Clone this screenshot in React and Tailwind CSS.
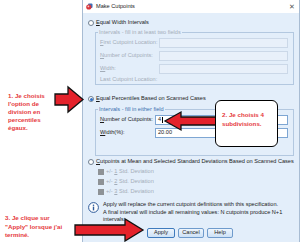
import React from "react";

function Radio({ checked }) {
  return (
    <span className="flex h-[6px] w-[6px] shrink-0 items-center justify-center rounded-full border border-[#6f7f91] bg-white">
      {checked && <span className="h-[3px] w-[3px] rounded-full bg-[#2f6fc6]" />}
    </span>
  );
}

function AppIcon() {
  return (
    <svg width="7" height="7" viewBox="0 0 7 7" aria-hidden="true">
      <rect x="2" y="0.5" width="4.5" height="4.5" rx="1" fill="#3d6fb8" />
      <circle cx="2.8" cy="4" r="2.6" fill="#d8343b" />
      <circle cx="2.4" cy="3.4" r="0.9" fill="#f7c5c5" />
    </svg>
  );
}

function Field({ label, value, disabled, labelWidth, inputWidth, hasInput = true, mnemonic }) {
  return (
    <div className="flex h-[10px] items-center">
      <span className={`shrink-0 ${disabled ? "text-[#a3adb9]" : "text-[#1b1b1b]"}`} style={{ width: labelWidth }}>
        {mnemonic ? (
          <>
            <span className="underline">{label[0]}</span>
            {label.slice(1)}
          </>
        ) : (
          label
        )}
      </span>
      {hasInput && (
        <div
          className={`flex h-[10px] items-center px-[2px] ${
            disabled ? "border border-[#cbd8e8] bg-[#e8f0fa]" : "border border-[#7ea6d3] bg-white"
          }`}
          style={{ width: inputWidth }}
        >
          {value}
        </div>
      )}
    </div>
  );
}

function Check({ n }) {
  return (
    <div className="flex h-[10px] items-center gap-[2px] text-[#a3adb9]">
      <span className="h-[6px] w-[6px] shrink-0 bg-[#8e9296]" />
      <span>
        +/- <span className="underline">{n}</span> Std. Deviation
      </span>
    </div>
  );
}

function Button({ children, width, focused }) {
  return (
    <div
      className={`flex h-[10px] items-center justify-center rounded-[2px] border bg-gradient-to-b from-[#eef5fd] to-[#cde1f6] ${
        focused ? "border-[#3f7bbd]" : "border-[#6f9bcc]"
      }`}
      style={{ width }}
    >
      {children}
    </div>
  );
}

export default function App() {
  return (
    <div className="relative flex h-[242px] w-[300px] overflow-hidden bg-white font-['Liberation_Sans',Arial,sans-serif] text-[5.6px] leading-none text-[#1b1b1b]">
      <div className="w-[82px] shrink-0" />

      <div className="flex w-[218px] flex-col border-x border-[#a8bcd3]">
        <div className="flex h-[13px] shrink-0 items-center bg-white pl-[3px] pr-[4px]">
          <AppIcon />
          <span className="ml-[3px] flex-1">Make Cutpoints</span>
          <span className="text-[7px] text-[#555]">✕</span>
        </div>

        <div className="flex flex-1 flex-col bg-[#e3eefa] pl-[5px] pr-[5px] pt-[5px]">
          <div className="flex h-[9px] items-center gap-[2px]">
            <Radio />
            <span>
              <span className="underline">E</span>qual Width Intervals
            </span>
          </div>

          <div className="ml-[7px] mt-[5px] h-[53px] border border-[#b3c8e0] pl-[4px] pr-[4px]">
            <span className="-ml-[2px] -mt-[4px] block h-[7px] w-fit bg-[#e3eefa] px-[1px] leading-[7px] text-[#a3adb9]">
              Intervals - fill in at least two fields
            </span>
            <div className="mt-[2px] flex flex-col gap-[3px]">
              <Field label="First Cutpoint Location:" disabled labelWidth={59} inputWidth={129} mnemonic />
              <Field label="Number of Cutpoints:" disabled labelWidth={59} inputWidth={129} mnemonic />
              <Field label="Width:" disabled labelWidth={59} inputWidth={129} mnemonic />
            </div>
            <div className="mt-[2px] flex h-[8px] items-center text-[#a3adb9]">Last Cutpoint Location:</div>
          </div>

          <div className="mt-[10px] flex h-[8px] items-center gap-[2px]">
            <Radio checked />
            <span>
              <span className="underline">E</span>qual Percentiles Based on Scanned Cases
            </span>
          </div>

          <div className="ml-[7px] mt-[6px] h-[47px] border border-[#b3c8e0] pl-[4px] pr-[4px]">
            <span className="-ml-[2px] -mt-[4px] block h-[7px] w-fit bg-[#e3eefa] px-[1px] leading-[7px] text-[#3b6fae]">
              Intervals - fill in either field
            </span>
            <div className="mt-[2px] flex flex-col gap-[3px]">
              <Field
                label="Number of Cutpoints:"
                labelWidth={55}
                inputWidth={133}
                mnemonic
                value={
                  <span className="flex items-center">
                    4<span className="ml-[1px] h-[6px] w-[0.6px] bg-black" />
                  </span>
                }
              />
              <Field label="Width(%):" labelWidth={55} inputWidth={133} mnemonic value="20.00" />
            </div>
          </div>

          <div className="mt-[2px] flex h-[8px] items-center gap-[2px]">
            <Radio />
            <span>
              <span className="underline">C</span>utpoints at Mean and Selected Standard Deviations Based on Scanned Cases
            </span>
          </div>

          <div className="ml-[10px] mt-[1px] flex flex-col">
            <Check n="1" />
            <Check n="2" />
            <Check n="3" />
          </div>

          <div className="mt-[4px] flex gap-[4px]">
            <svg width="11" height="11" viewBox="0 0 11 11" className="mt-[1px] shrink-0" aria-hidden="true">
              <circle cx="5.5" cy="5.5" r="4.9" fill="white" stroke="#2d5a9a" strokeWidth="1" />
              <circle cx="5.5" cy="3.2" r="0.8" fill="#2d5a9a" />
              <rect x="4.8" y="4.6" width="1.4" height="3.8" fill="#2d5a9a" />
            </svg>
            <div className="flex flex-col leading-[7.5px]">
              <span>Apply will replace the current cutpoint definitions with this specification.</span>
              <span>A final interval will include all remaining values: N cutpoints produce N+1</span>
              <span>intervals.</span>
            </div>
          </div>

          <div className="ml-[59px] mt-[4px] flex gap-[3px]">
            <Button width={28} focused>
              Apply
            </Button>
            <Button width={26}>Cancel</Button>
            <Button width={26}>Help</Button>
          </div>
        </div>
      </div>

      <svg className="pointer-events-none absolute left-0 top-0" width="300" height="242" aria-hidden="true">
        <polygon
          points="55,94 68,94 68,87 83,99.5 68,112 68,105 55,105"
          fill="#e4222b"
          stroke="#111"
          strokeWidth="1.3"
          strokeLinejoin="miter"
        />
        <polygon
          points="217,117 181,117 181,112 165,121 181,130 181,125 217,125"
          fill="#e4222b"
          stroke="#111"
          strokeWidth="1.3"
        />
        <polygon
          points="75,225 125,225 125,219 143,230 125,241 125,235 75,235"
          fill="#e4222b"
          stroke="#111"
          strokeWidth="1.3"
        />
      </svg>

      <div className="absolute left-[215px] top-[100px] h-[47px] w-[63px] rounded-[6px] border-[1.5px] border-black bg-white px-[6px] pt-[9px] text-[6.2px] font-bold leading-[9px] text-[#e5383b]">
        2. Je choisis 4
        <br />
        subdivisions.
      </div>

      <div className="absolute left-[8px] top-[92px] text-[6.2px] font-bold leading-[8px] text-[#e5383b]">
        1. Je choisis
        <br />
        l'option de
        <br />
        division en
        <br />
        percentiles
        <br />
        égaux.
      </div>

      <div className="absolute left-[5px] top-[214px] text-[6.2px] font-bold leading-[8.5px] text-[#e5383b]">
        3. Je clique sur
        <br />
        "Apply" lorsque j'ai
        <br />
        terminé.
      </div>
    </div>
  );
}
